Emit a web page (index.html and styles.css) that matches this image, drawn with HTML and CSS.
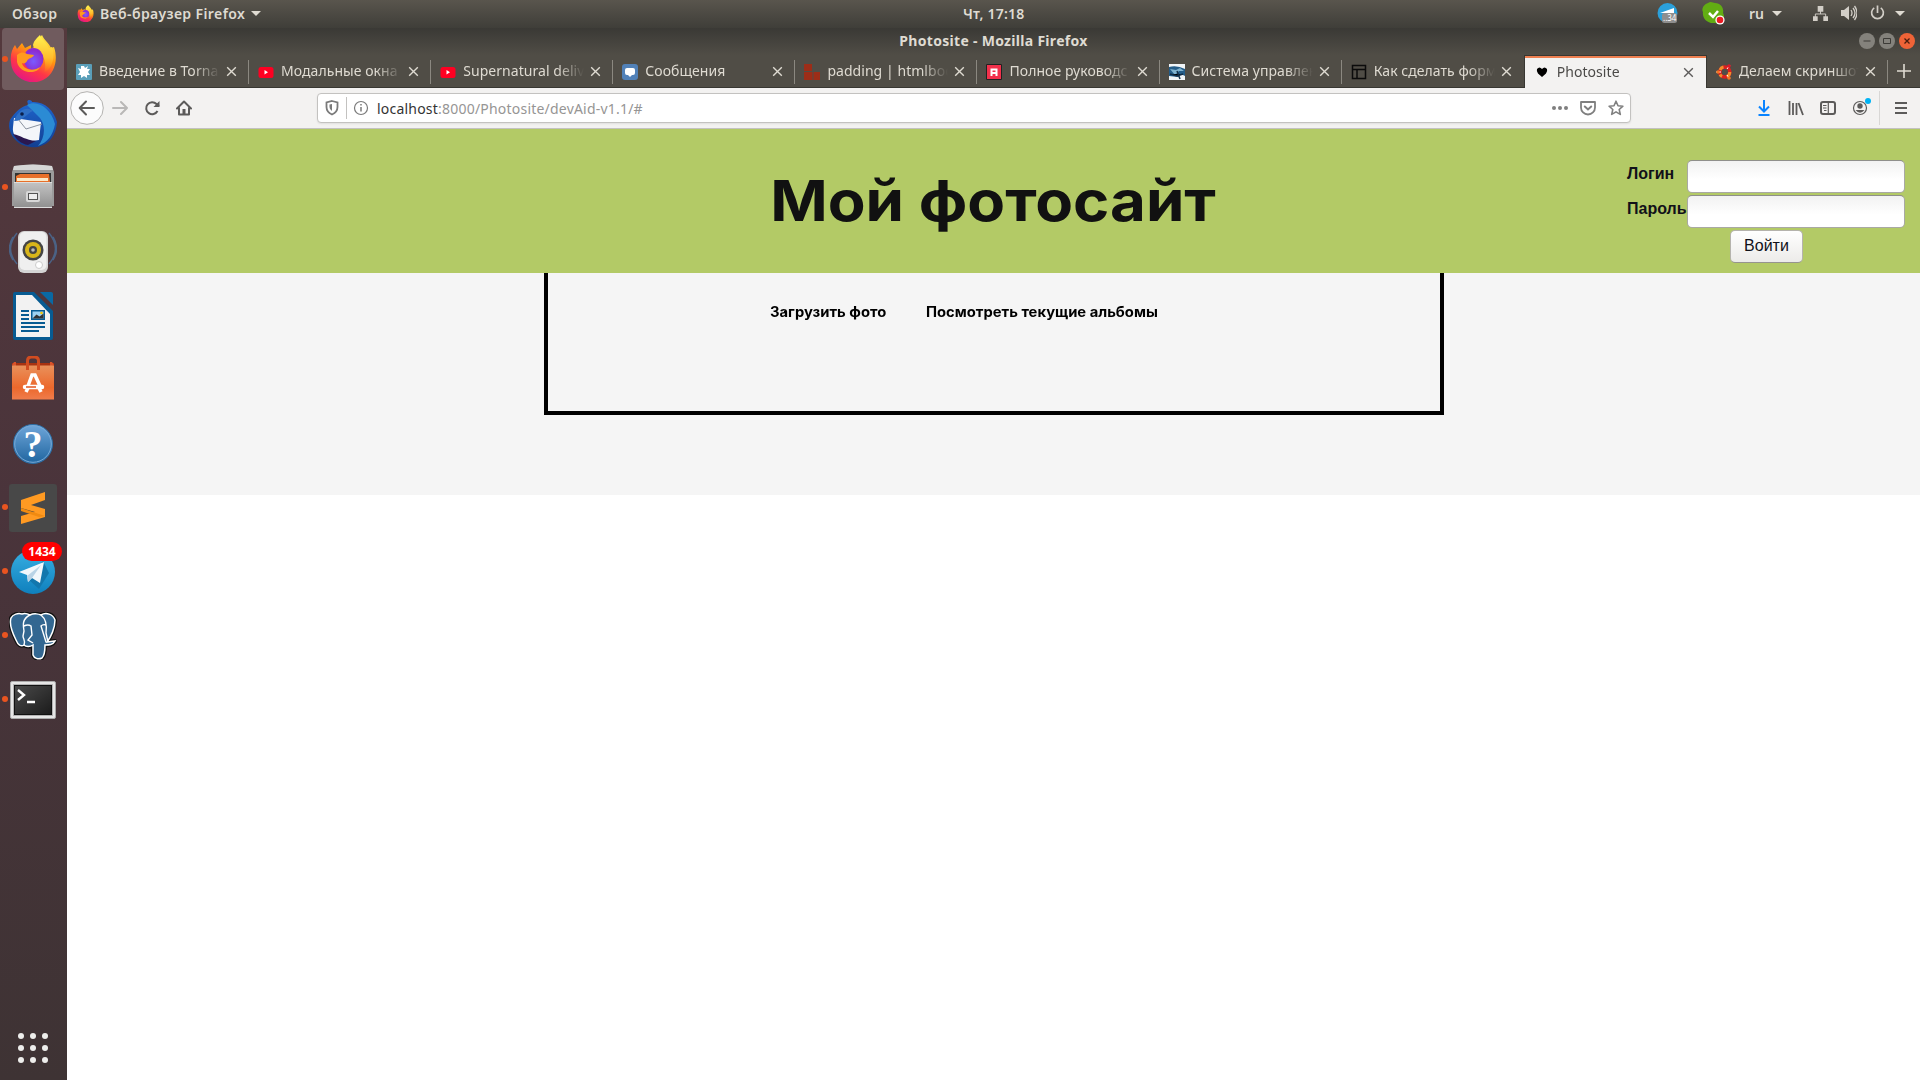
FILE: index.html
```html
<!DOCTYPE html>
<html lang="ru">
<head>
<meta charset="utf-8">
<title>Photosite</title>
<link rel="stylesheet" href="styles.css">
</head>
<body>
<svg class="defs" width="0" height="0" aria-hidden="true">
  <defs>
    <linearGradient id="fxBody" x1=".8" y1="0" x2=".3" y2="1"><stop offset="0" stop-color="#fff44f"/><stop offset=".4" stop-color="#ff980e"/><stop offset=".7" stop-color="#ff3647"/><stop offset="1" stop-color="#e31587"/></linearGradient>
    <linearGradient id="fxTail" x1=".5" y1="0" x2=".5" y2="1"><stop offset="0" stop-color="#fff44f"/><stop offset=".6" stop-color="#ffbd2f"/><stop offset="1" stop-color="#ff980e" stop-opacity="0"/></linearGradient>
    <radialGradient id="fxGlobe" cx=".5" cy=".6"><stop offset="0" stop-color="#7a5cff"/><stop offset="1" stop-color="#8c2bd0"/></radialGradient>
    <linearGradient id="blue" x1="0" y1="0" x2="0" y2="1"><stop offset="0" stop-color="#1f66cf"/><stop offset="1" stop-color="#123f92"/></linearGradient>
    <linearGradient id="steel" x1="0" y1="0" x2="0" y2="1"><stop offset="0" stop-color="#c4c4c4"/><stop offset="1" stop-color="#8f8f8f"/></linearGradient>
    <linearGradient id="orange" x1="0" y1="0" x2="0" y2="1"><stop offset="0" stop-color="#e9915b"/><stop offset=".65" stop-color="#ec682c"/><stop offset="1" stop-color="#f07c4b"/></linearGradient>
    <linearGradient id="help" x1="0" y1="0" x2="0" y2="1"><stop offset="0" stop-color="#6fa6da"/><stop offset="1" stop-color="#1f659f"/></linearGradient>
    <linearGradient id="tg" x1="0" y1="0" x2="0" y2="1"><stop offset="0" stop-color="#37aee2"/><stop offset="1" stop-color="#0f80bd"/></linearGradient>
    <linearGradient id="term" x1="0" y1="0" x2="1" y2="1"><stop offset="0" stop-color="#4a4a4a"/><stop offset="1" stop-color="#1b1b1b"/></linearGradient>
    <symbol id="firefox" viewBox="0 0 48 48">
      <path d="M13 9l3 5 6-3v4l7-5C29 5 32 2 33 1c2 5 7 8 9 13l3-1c3 9 2 17-1 23A22 21 0 0 1 2 28C1 21 3 15 6 11l2 4z" fill="url(#fxBody)"/>
      <path d="M31 1c2 5 7 8 9 13l3-1c4 10 0 22-8 26 2-6 2-14-3-19-3-3-7-4-8-9 1-5 5-8 7-10z" fill="url(#fxTail)"/>
      <ellipse cx="24.500" cy="25" rx="10" ry="11" fill="url(#fxGlobe)"/>
      <path d="M8 21c5-4 8-2 10-1l7 1c-1 3-6 3-7 6-1 2-3 3-5 2 2 8 13 8 18 4-2 7-20 8-23-5z" fill="#ff9a1e"/>
    </symbol>
    <symbol id="close" viewBox="0 0 12 12"><path d="M1.300 1.300l9.400 9.400M10.700 1.300l-9.400 9.400" stroke="currentColor" stroke-width="1.500" fill="none"/></symbol>
    <symbol id="youtube" viewBox="0 0 16 16"><rect x=".5" y="3" width="15" height="11" rx="2.500" fill="#ff0022"/><path d="M6.500 6v4.600l3.500-2.300z" fill="#fff"/></symbol>
    <symbol id="down" viewBox="0 0 10 5"><path d="M0 0h10L5 5z" fill="currentColor"/></symbol>
  </defs>
</svg>

<header class="panel">
  <span class="panel-overview">Обзор</span>
  <svg class="panel-fx"><use href="#firefox"/></svg>
  <span class="panel-app">Веб-браузер Firefox</span>
  <svg class="arrow"><use href="#down"/></svg>
  <span class="clock">Чт, 17:18</span>
  <div class="tray">
    <svg class="tray-tg" viewBox="0 0 21 21"><circle cx="10.500" cy="10" r="10" fill="#2ba0da"/><path d="M3 10l14-5v5z" fill="#fff"/><rect x="5" y="10" width="15" height="10" rx="2.500" fill="#8e8e8e"/><text x="6" y="17.500" class="tray-num">..34</text></svg>
    <svg class="tray-skype" viewBox="0 0 23 23"><path d="M6 1c3-2 5 0 7 0 6 0 9 5 8 10 3 5-1 12-8 10C5 22 0 16 1 10-1 7 2 2 6 1z" fill="#62ad13"/><path d="M7 11l4 4 5-6" stroke="#fff" stroke-width="2.500" fill="none"/><circle cx="18" cy="18" r="4.600" fill="#fff"/><circle cx="18" cy="18" r="3.300" fill="#ec1c24"/></svg>
    <span class="lang">ru</span>
    <svg class="arrow tray-arrow"><use href="#down"/></svg>
    <svg class="tray-net" viewBox="0 0 16 16" fill="#d2cec7"><path d="M5 0h6v6H5zM0 11h5v5H0zM11 11h5v5h-5z"/><path d="M8 5v3.500M2.500 12V8.500h11V12" fill="none" stroke="#d2cec7"/></svg>
    <svg class="tray-vol" viewBox="0 0 16 16"><path d="M0 5h3l5-4v14l-5-4H0z" fill="#d2cec7"/><path d="M10 5q2 3 0 6M12 3q4 5 0 10M13.500 1q5 7 0 14" fill="none" stroke="#d2cec7" stroke-width="1.300"/></svg>
    <svg class="tray-power" viewBox="0 0 16 16"><path d="M4.500 2.500a6.300 6.300 0 1 0 7 0M8 0v8" fill="none" stroke="#d2cec7" stroke-width="1.800"/></svg>
    <svg class="arrow"><use href="#down"/></svg>
  </div>
</header>

<div class="desktop">
  <nav class="dock">
    <div class="app running active"><svg viewBox="0 0 48 48"><use href="#firefox"/></svg></div>
    <div class="app"><svg viewBox="0 0 48 48"><path d="M3 17C9 9 14 6 19 5c0-3-2-4 1-5 2 0 3 1 3 2 12-1 22 8 25 20-1 13-7 22-19 25C13 49 1 39 0 26c0-4 1-7 3-9z" fill="url(#blue)"/><path d="M18 5C28-1 42 8 46 24c-2 11-7 18-17 22 7-8 8-20 2-28z" fill="#2b8bd4"/><path d="M5 18l27 4-2 18-14 2C7 40 3 34 4 27z" fill="#f4f6fa"/><path d="M9 19l8 10 16-5" fill="none" stroke="#8a929f"/><path d="M4 34c9 2 12 6 23 7l-8 4C12 44 7 39 4 34z" fill="#2a1850"/><path d="M5 21C10 7 20 7 24 11c-6 2-9 10-19 10z" fill="#2f6fc4"/><circle cx="13" cy="14" r="1.800" fill="#0b1f4a"/></svg></div>
    <div class="app running"><svg viewBox="0 0 48 48"><path d="M5 2q19-3 38 0l2 6v34H3V8z" fill="#9b9b9b"/><path d="M5 2q19-3 38 0l1 4H4z" fill="#d6d6d6"/><path d="M6 9h36v10H6z" fill="#333"/><path d="M7 12l4-2h29l1 8H7z" fill="#e8702a"/><path d="M8 14h31v3H8z" fill="#fbe9c8"/><path d="M5 18h38v26H5z" fill="url(#steel)"/><path d="M5 18.500h38M5 43.500h38" stroke="#ddd"/><rect x="17" y="27" width="14" height="11" rx="2" fill="#d8d8d8"/><rect x="19.500" y="29.500" width="9" height="6" fill="#eee" stroke="#555"/></svg></div>
    <div class="app"><svg viewBox="0 0 48 48"><g fill="none" stroke="#4b6285" stroke-width="1.500"><path d="M8 5Q-5 21 8 36M4 9q-7 12 0 23M40 5q13 16 0 31M44 9q7 12 0 23"/></g><rect x="9" y="3" width="30" height="42" rx="6" fill="#d4d4d4"/><rect x="10.500" y="4" width="27" height="38" rx="5" fill="#efefef"/><circle cx="24" cy="22" r="10.500" fill="#454545"/><circle cx="24" cy="22" r="8" fill="#d8b51a"/><circle cx="24" cy="22" r="4" fill="#444"/><circle cx="24" cy="22" r="1.800" fill="#bbb"/><circle cx="30" cy="37" r="3.500" fill="#fff" stroke="#ccc"/></svg></div>
    <div class="app"><svg viewBox="0 0 48 48"><path d="M6 0h19l19 19v27q0 2-2 2H6q-2 0-2-2V2q0-2 2-2z" fill="#075b92"/><path d="M31 0h11q2 0 2 2v11z" fill="#0a69a3"/><path d="M7 3h16l18 19v23H7z" fill="#f2f2f2"/><path d="M12 19h8M12 23h8M12 27h8M12 31h24M12 35h24M12 39h18" stroke="#075b92" stroke-width="2"/><rect x="22" y="18" width="14" height="10" fill="#075b92"/><path d="M23.500 19.500h11v7h-11z" fill="#9ed3f2"/><path d="M23.500 26.500l4-4 3 2 4-3v5z" fill="#333"/><circle cx="32.500" cy="21" r="1.300" fill="#f5c400"/></svg></div>
    <div class="app"><svg viewBox="0 0 48 48"><path d="M3 7h42v4H3z" fill="#a83211"/><path d="M3 9l2-3h2v5zM45 9l-2-3h-2v5z" fill="#d9532a"/><path d="M3 9.500h42v34H3z" fill="url(#orange)"/><path d="M18.500 14V5q0-4 4-4h3q4 0 4 4v9" fill="none" stroke="#d14c20" stroke-width="3"/><path d="M19 30l4-11h3l5 11M17 36l2-4M30 32l2 4" fill="none" stroke="#fff" stroke-width="3.500"/><path d="M16 31h17" stroke="#fff" stroke-width="4.500" stroke-linecap="round"/><path d="M17 31h10" stroke="#e2561f" stroke-width="1.500"/></svg></div>
    <div class="app"><svg viewBox="0 0 48 48"><circle cx="24" cy="24" r="19.500" fill="url(#help)" stroke="#2c6ea5"/><circle cx="24" cy="24" r="18.300" fill="none" stroke="#78a9d6"/><text x="24" y="37" text-anchor="middle" class="question">?</text></svg></div>
    <div class="app running"><svg viewBox="0 0 48 48"><rect width="48" height="48" rx="3" fill="#484848"/><path d="M12 16l24-8v8l-14 5 14 4v8l-24 7v-8l14-4-14-4z" fill="#ff9a22"/><path d="M12 24l24 8-6 1-18-6z" fill="#f08a10"/></svg></div>
    <div class="app running"><svg viewBox="0 0 48 48"><circle cx="24" cy="24" r="22" fill="url(#tg)"/><path d="M19 31l15-18 6 12-10 16z" fill="#1377ad"/><path d="M10 24l25-10-4 21-8-5-4 4-1-7z" fill="#f2f7fb"/><path d="M18 28l14-11-9 13-4 4z" fill="#b9d3e6"/></svg><b class="badge">1434</b></div>
    <div class="app running"><svg viewBox="0 0 48 48"><path d="M13 2c3-1 6 0 8 1 4-2 9-1 11 0 5-3 12-1 14 5 0 8-4 17-8 22l8-1c-2 4-6 4-10 4 0 5 0 10-3 13-4 2-8 0-9-3V33c-3 2-7 2-9 0-3 2-6 0-8-5C3 20 0 12 2 6c2-4 7-5 11-4z" fill="#336791" stroke="#111" stroke-width="4" stroke-linejoin="round"/><path d="M13 2c3-1 6 0 8 1 4-2 9-1 11 0 5-3 12-1 14 5 0 8-4 17-8 22l8-1c-2 4-6 4-10 4 0 5 0 10-3 13-4 2-8 0-9-3V33c-3 2-7 2-9 0-3 2-6 0-8-5C3 20 0 12 2 6c2-4 7-5 11-4z" fill="#336791" stroke="#fff" stroke-width="1.500"/><path d="M21 3c-8 4-7 10-6 16l-1 5c0 3 3 5 1 9M15 14q4-2 7 0l1 9-4 5 5 3M32 3c5 4 6 11 5 18l2 9M37 13q-3-1-5 1l5 16" fill="none" stroke="#fff" stroke-width="1.400"/></svg></div>
    <div class="app running"><svg viewBox="0 0 48 48"><rect x="1.500" y="5.500" width="45" height="37" rx="1.500" fill="#e6e6e6" stroke="#aaa"/><rect x="4" y="8" width="40" height="32" fill="#b4b4b4"/><rect x="5.500" y="9.500" width="37" height="29" fill="url(#term)" stroke="#111"/><path d="M9 14l6 5-6 5M18 26h8" fill="none" stroke="#fff" stroke-width="2.400"/></svg></div>
    <div class="grid-dots"><i></i><i></i><i></i><i></i><i></i><i></i><i></i><i></i><i></i></div>
  </nav>

  <div class="window">
    <div class="titlebar">
      <span class="title">Photosite - Mozilla Firefox</span>
      <div class="controls">
        <svg viewBox="0 0 16 16"><circle cx="8" cy="8" r="8" fill="#84827c"/><path d="M4.500 8h7" stroke="#3c3b37"/></svg>
        <svg viewBox="0 0 16 16"><circle cx="8" cy="8" r="8" fill="#84827c"/><path d="M4.500 5.500h7v5h-7z" fill="none" stroke="#3c3b37"/></svg>
        <svg viewBox="0 0 16 16"><circle cx="8" cy="8" r="8" fill="#ef6337"/><path d="M5.500 5.500l5 5m0-5l-5 5" stroke="#4a1d0e" stroke-width="1.300"/></svg>
      </div>
    </div>

    <div class="tabs">
      <div class="tab"><svg class="fav" viewBox="0 0 16 16"><rect width="16" height="16" rx="1" fill="#5a9fb9"/><path d="M8 2l1 2 3-2-1 3 3 0-2 3 2 3-3 0 0 3-3-2-3 2 0-3-3 0 2-3-2-4 3 1 0-3z" fill="#fff"/></svg><span class="label">Введение в Torna</span><svg class="x"><use href="#close"/></svg></div>
      <div class="tab"><svg class="fav"><use href="#youtube"/></svg><span class="label">Модальные окна</span><svg class="x"><use href="#close"/></svg></div>
      <div class="tab"><svg class="fav"><use href="#youtube"/></svg><span class="label">Supernatural deliv</span><svg class="x"><use href="#close"/></svg></div>
      <div class="tab"><svg class="fav" viewBox="0 0 16 16"><rect width="16" height="16" rx="3" fill="#5181b8"/><path d="M5 4h6q2 0 2 2v3q0 2-2 2h-1l-2 2-2-2H5q-2 0-2-2V6q0-2 2-2z" fill="#fff"/></svg><span class="label">Сообщения</span><svg class="x"><use href="#close"/></svg></div>
      <div class="tab"><svg class="fav" viewBox="0 0 16 16" fill="#9c2d18"><path d="M0 0h8v7H0zM0 8h8.500v8H0zM9.500 8H16v8H9.500z"/></svg><span class="label">padding | htmlboo</span><svg class="x"><use href="#close"/></svg></div>
      <div class="tab"><svg class="fav" viewBox="0 0 16 16"><path d="M.5.5h15v15H.5z" fill="#f2304b" stroke="#222"/><path d="M5.500 12V5.500h5V12M5.500 9h5" fill="none" stroke="#fff" stroke-width="2"/></svg><span class="label">Полное руководс</span><svg class="x"><use href="#close"/></svg></div>
      <div class="tab"><svg class="fav" viewBox="0 0 16 16"><path d="M0 0h16v16H0z" fill="#f1f5f8"/><path d="M0 3q8-2 16 2v7l-4-2-3 3-9-1z" fill="#245d89"/><path d="M1 5l6 1 4-2 4 3-5 0-4 4z" fill="#7fb2cf"/><path d="M8 7l3 8M1 10l7 2 6-2" stroke="#122e48" stroke-width="1.500"/></svg><span class="label">Система управлен</span><svg class="x"><use href="#close"/></svg></div>
      <div class="tab"><svg class="fav" viewBox="0 0 16 16"><path d="M1.500 1.500h13v13h-13zM1.500 5.500h13M6 5.500v9" fill="none" stroke="#0b0b0b" stroke-width="1.500"/></svg><span class="label">Как сделать форм</span><svg class="x"><use href="#close"/></svg></div>
      <div class="tab current"><svg class="fav" viewBox="0 0 16 16"><path d="M8 13L4 9.500Q2.300 7 3 5q2.500-3 5 0 2.500-3 5 0 .7 2-1 4.500z" fill="#000"/></svg><span class="label">Photosite</span><svg class="x"><use href="#close"/></svg></div>
      <div class="tab last"><svg class="fav" viewBox="0 0 16 16"><circle cx="8.800" cy="8" r="5" fill="none" stroke="#dd1f1f" stroke-width="3.600"/><path d="M4 6a5 5 0 0 1 3.500-3M13.800 8a5 5 0 0 1-3 4.600M4 10.500a5 5 0 0 0 2 2" fill="none" stroke="#f28d2b" stroke-width="3"/><path d="M0 8h5M11 5l3-4M11 11l3 4" stroke="#fff" stroke-width="1"/><circle cx="2" cy="8" r="1.800" fill="#f47421"/><circle cx="13" cy="2" r="1.800" fill="#d9182a"/><circle cx="13" cy="14" r="1.800" fill="#f47421"/></svg><span class="label">Делаем скриншот</span><svg class="x"><use href="#close"/></svg></div>
      <svg class="plus" viewBox="0 0 14 14"><path d="M7 0v14M0 7h14" stroke="#dfdbd2" stroke-width="1.600"/></svg>
    </div>

    <div class="toolbar">
      <svg class="back" viewBox="0 0 34 34"><circle cx="17" cy="17" r="16.300" fill="#fcfcfc" stroke="#b3b2b0"/><path d="M24 17H10m6-6.500L9.700 17l6.300 6.500" fill="none" stroke="#5c5b5a" stroke-width="2" stroke-linecap="round" stroke-linejoin="round"/></svg>
      <svg class="fwd" viewBox="0 0 16 16"><path d="M1 8h14M9 2l6 6-6 6" fill="none" stroke="#b9b8b7" stroke-width="2" stroke-linecap="round" stroke-linejoin="round"/></svg>
      <svg class="reload" viewBox="0 0 16 16"><path d="M13.500 11A6 6 0 1 1 12.500 4L15 6" fill="none" stroke="#5c5b5a" stroke-width="2"/><path d="M15.500 1v6H9.500z" fill="#5c5b5a"/></svg>
      <svg class="home" viewBox="0 0 16 16"><path d="M1 8.500L8 1.500l7 7M3 8v6.500h10V8" fill="none" stroke="#5c5b5a" stroke-width="2" stroke-linecap="round" stroke-linejoin="round"/><path d="M6.500 14V9h3v5" fill="#5c5b5a"/></svg>
      <div class="urlbar">
        <svg class="shield" viewBox="0 0 14 16"><path d="M7 1l5.500 1.500V7q0 5-5.500 7.500Q1.500 12 1.500 7V2.500z" fill="none" stroke="#7a7a7a" stroke-width="1.800"/><path d="M7 4v7Q4.500 9.500 4.500 7V4.500z" fill="#7a7a7a"/></svg>
        <i class="urlsep"></i>
        <svg class="info" viewBox="0 0 16 16"><circle cx="8" cy="8" r="6.500" fill="none" stroke="#7a7a7a" stroke-width="1.200"/><path d="M8 7v4.500M8 4v1.600" stroke="#7a7a7a" stroke-width="1.500"/></svg>
        <span class="url"><b>localhost</b>:8000/Photosite/devAid-v1.1/#</span>
        <svg class="dots" viewBox="0 0 16 16" fill="#7f7f7f"><circle cx="2" cy="8" r="2"/><circle cx="8" cy="8" r="2"/><circle cx="14" cy="8" r="2"/></svg>
        <svg class="pocket" viewBox="0 0 16 16"><path d="M1 2h14v5.500a7 7 0 0 1-14 0z" fill="none" stroke="#7f7f7f" stroke-width="1.800" stroke-linejoin="round"/><path d="M4.800 6.500L8 9.500l3.200-3" fill="none" stroke="#7f7f7f" stroke-width="2" stroke-linecap="round"/></svg>
        <svg class="star" viewBox="0 0 16 16"><path d="M8 1.200l2 4.500 4.900.5-3.700 3.300 1.100 4.900L8 11.900l-4.300 2.500 1.100-4.900L1.100 6.200l4.900-.5z" fill="none" stroke="#7f7f7f" stroke-width="1.600" stroke-linejoin="round"/></svg>
      </div>
      <div class="tools">
        <svg viewBox="0 0 16 16"><path d="M8 0v11M3 6.500l5 5 5-5M2.500 15h11" fill="none" stroke="#0a84ff" stroke-width="2"/></svg>
        <svg viewBox="0 0 16 16"><path d="M1.500 1v14M5 3v12M8.500 3v12M10.500 3l4.500 12" fill="none" stroke="#5c5b5a" stroke-width="1.800"/></svg>
        <svg viewBox="0 0 16 16"><rect x="1" y="2" width="14" height="12" rx="2" fill="none" stroke="#5c5b5a" stroke-width="2"/><path d="M8.300 2v12M3 5.500h3.500M3 8h3.500M4 10.500h2.500" stroke="#5c5b5a" stroke-width="1.200"/></svg>
        <svg class="account" viewBox="0 0 19 18"><circle cx="8" cy="10" r="6.500" fill="none" stroke="#5c5b5a" stroke-width="1.200"/><circle cx="8" cy="8" r="2.700" fill="#5c5b5a"/><path d="M3.500 12h9Q8 17.500 3.500 12z" fill="#5c5b5a"/><circle cx="16" cy="3" r="3" fill="#00b3f4"/></svg>
        <i class="toolsep"></i>
        <svg class="menu" viewBox="0 0 12 12"><path d="M0 1h12M0 6h12M0 11h12" stroke="#5c5b5a" stroke-width="1.800"/></svg>
      </div>
    </div>

    <main class="page">
      <header class="hero">
        <h1>Мой фотосайт</h1>
        <form class="login">
          <label>Логин</label><input type="text">
          <label>Пароль</label><input type="password">
          <button type="button">Войти</button>
        </form>
      </header>
      <section class="content">
        <div class="box"><a class="upload"><span>Загрузить фото</span></a><a class="albums"><span>Посмотреть текущие альбомы</span></a></div>
      </section>
    </main>
  </div>
</div>
</body>
</html>
```
FILE: styles.css
```css
* { box-sizing: border-box; }
html, body { height: 100%; }
body { margin: 0; overflow: hidden; display: flex; flex-direction: column; background: #fff; font-family: "Noto Sans", sans-serif; font-size: 14px; }
svg { display: block; flex: none; }
.defs { position: absolute; }

.panel { height: 28px; flex: none; display: grid; grid-template-columns: auto auto auto auto 1fr auto; align-items: center; padding: 0 15px 2px 12px; background: linear-gradient(#59554d, #3f3e39); color: #dfdbd2; font-weight: 600; font-size: 14px; white-space: nowrap; }
.panel-overview { width: 65px; letter-spacing: .3px; }
.panel-fx { width: 17px; height: 17px; }
.panel-app { width: 151px; margin-left: 6px; letter-spacing: .4px; }
.arrow { width: 10px; height: 5px; }
.clock { padding-left: 702px; letter-spacing: .2px; }
.tray { display: flex; align-items: center; }
.tray-tg { width: 21px; height: 21px; margin-right: 24px; }
.tray-num { font: 8px "Noto Sans", sans-serif; fill: #fff; }
.tray-skype { width: 23px; height: 23px; margin-right: 24px; }
.lang { width: 14px; }
.tray-arrow { margin: 0 31px 0 9px; }
.tray-net { width: 15px; height: 15px; margin-right: 13px; }
.tray-vol { width: 16px; height: 16px; margin-right: 13px; }
.tray-power { width: 15px; height: 16px; margin-right: 10px; }

.desktop { flex: 1; min-height: 0; display: flex; }
.dock { width: 67px; flex: none; display: flex; flex-direction: column; background: linear-gradient(#54393d, #4a343b 45%, #3e3334); }
.app { position: relative; width: 66px; height: 64px; flex: none; display: grid; place-items: center; padding-bottom: 1px; }
.app svg { width: 48px; height: 48px; }
.app.active { height: 62px; margin-bottom: 2px; padding-bottom: 2px; background: #705b5e; border-radius: 4px; width: 62px; margin-left: 2px; }
.running::before { content: ""; position: absolute; left: 2px; top: 28px; width: 6px; height: 6px; border-radius: 50%; background: #e95420; }
.active::before { left: 0; }
.badge { position: absolute; left: 22px; top: 2px; width: 40px; height: 19px; border-radius: 10px; background: #f00; color: #fff; font: bold 12px/19px "Noto Sans", sans-serif; text-align: center; }
.question { font: bold 38px "Liberation Serif", serif; fill: #fff; }
.grid-dots { margin: auto 0 17px 18px; display: grid; grid-template-columns: repeat(3, 6px); gap: 6px; }
.grid-dots i { width: 6px; height: 6px; border-radius: 50%; background: #eeeeec; }

.window { flex: 1; min-width: 0; display: flex; flex-direction: column; }
.titlebar { height: 27px; flex: none; position: relative; display: flex; align-items: center; justify-content: center; padding-bottom: 2px; background: linear-gradient(#3a3935, #504d46); color: #dfdbd2; font-weight: 700; }
.title { letter-spacing: .3px; }
.controls { position: absolute; right: 5px; top: 5px; display: flex; gap: 4px; }
.controls svg { width: 16px; height: 16px; }

.tabs { height: 33px; flex: none; display: flex; background: #504d46; border-bottom: 1px solid #383732; }
.tab { width: 182.1px; flex: none; display: flex; align-items: center; padding: 1px 12px 0 9px; color: #dfdbd2; background: linear-gradient(#8b8880, #8b8880) right 5px / 1px 24px no-repeat; }
.tab:nth-child(8) { background: none; }
.fav { width: 16px; height: 16px; margin-right: 7px; }
.label { flex: 1; min-width: 0; overflow: hidden; white-space: nowrap; margin: -2px 6px 0 0; letter-spacing: .05px; -webkit-mask-image: linear-gradient(90deg, #000 78%, transparent); mask-image: linear-gradient(90deg, #000 78%, transparent); }
.x { width: 11px; height: 11px; color: #dfdbd2; }
.current { height: 33px; width: 183px; padding-top: 0; background: #f3f2f1; border: 1px solid #383732; border-width: 1px 1px 0; box-shadow: inset 0 2px #ee7f50; color: #4b4a48; }
.current .x { color: #5c5b5a; }
.last { width: 181px; }
.plus { width: 14px; height: 14px; margin: 9px 0 0 9px; }

.toolbar { height: 41px; flex: none; display: flex; align-items: center; background: #f3f2f1; border-bottom: 1px solid #c3c2c0; padding-left: 3px; }
.back { width: 34px; height: 34px; }
.fwd { width: 16px; height: 16px; margin-left: 8px; }
.reload { width: 16px; height: 16px; margin-left: 16px; }
.home { width: 16px; height: 16px; margin-left: 16px; }
.urlbar { width: 1314px; height: 30px; margin-left: 125px; display: flex; align-items: center; background: #fff; border: 1px solid #c3c2c0; border-radius: 4px; box-shadow: 0 1px 2px rgba(0,0,0,.08); padding: 0 6px 0 7px; }
.shield { width: 14px; height: 16px; }
.urlsep { width: 1px; height: 22px; background: #c3c2c0; margin: 0 6px 0 7px; }
.info { width: 16px; height: 16px; }
.url { flex: 1; margin-left: 8px; color: #969594; letter-spacing: .21px; }
.url b { font-weight: 400; color: #333; }
.dots { width: 16px; height: 16px; }
.pocket { width: 16px; height: 16px; margin: 0 12px; }
.star { width: 16px; height: 16px; }
.tools { display: flex; align-items: center; margin-left: 125px; gap: 16px; }
.tools svg { width: 16px; height: 16px; }
.tools .account { width: 19px; height: 18px; margin-top: -3px; }
.toolsep { width: 1px; height: 34px; background: #d8d7d5; margin-left: -8px; }
.tools .menu { width: 12px; height: 12px; margin-left: -1px; }

.page { flex: 1; background: #fff; }
.hero { position: relative; height: 144px; background: #b3ca66; display: flex; justify-content: center; align-items: center; }
h1 { margin: 0; font: 700 56px/1 Inter, sans-serif; color: #111; white-space: nowrap; transform: scaleX(1.103); }
.login { position: absolute; right: 15px; top: 31px; display: grid; grid-template-columns: 60px 218px; row-gap: 2px; font: bold 16px "Liberation Sans", sans-serif; color: #111119; }
.login label { padding-top: 5px; white-space: nowrap; }
.login input { width: 218px; height: 33px; border: 1px solid #a9a9a4; border-top-color: #8f8f8b; border-radius: 5px; background: linear-gradient(#f2f2f2, #fff 60%); padding: 0; }
.login button { grid-column: 1 / 3; width: 73px; height: 33px; margin-left: 103px; border: 1px solid #b5b3ad; border-bottom-color: #96948f; border-radius: 5px; background: linear-gradient(#fff, #ecebe9); padding: 0 0 2px; font: 16px "Liberation Sans", sans-serif; color: #111119; }
.content { height: 222px; background: #f5f5f5; }
.box { width: 900px; height: 142px; margin: 0 auto; border: 4px solid #000; border-top: 0; padding: 29px 0 0 222px; display: flex; font: 700 14px/20px Inter, sans-serif; color: #000; white-space: nowrap; }
.box span { display: inline-block; transform: scaleX(1.055); transform-origin: left; }
.upload { width: 156px; }
```
